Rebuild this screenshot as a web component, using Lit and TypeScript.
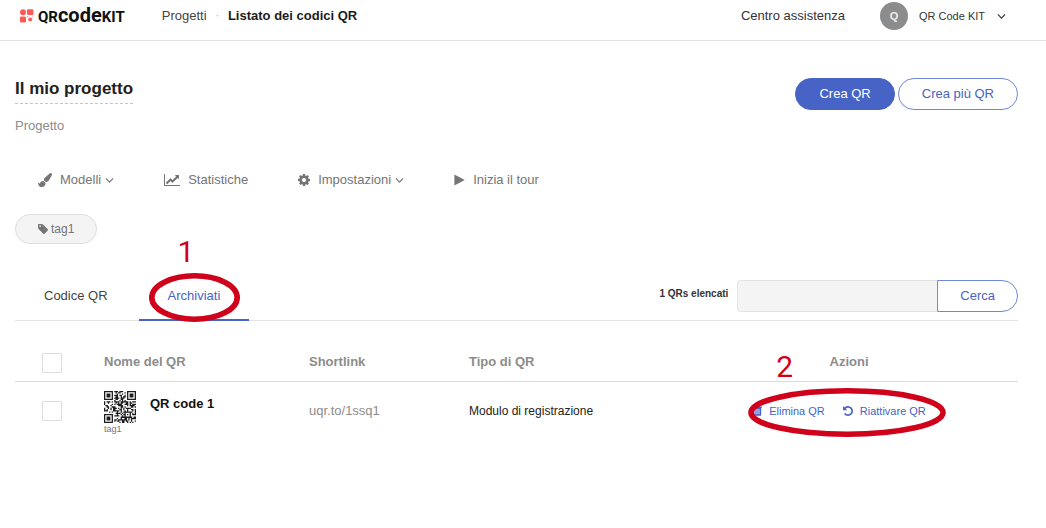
import { LitElement, html, css, svg } from "lit";
import { customElement, state } from "lit/decorators.js";

const QR_SIZE = 25;

/** Builds the module matrix of the thumbnail as one SVG path. */
function qrPath(): string {
  let seed = 4711;
  const next = () => {
    seed = (seed * 1103515245 + 12345) % 2147483648;
    return seed / 2147483648;
  };
  const finder = (x: number, y: number): boolean | null => {
    for (const [fx, fy] of [[0, 0], [QR_SIZE - 7, 0], [0, QR_SIZE - 7]]) {
      const dx = x - fx;
      const dy = y - fy;
      if (dx >= -1 && dx <= 7 && dy >= -1 && dy <= 7) {
        const ring = Math.max(Math.abs(dx - 3), Math.abs(dy - 3));
        return ring === 3 || ring <= 1;
      }
    }
    const align = Math.max(Math.abs(x - 18), Math.abs(y - 18));
    return align <= 2 ? align !== 1 : null;
  };
  let d = "";
  for (let y = 0; y < QR_SIZE; y++) {
    for (let x = 0; x < QR_SIZE; x++) {
      const random = next() < 0.56;
      if (finder(x, y) ?? random) d += `M${x} ${y}h1v1h-1z`;
    }
  }
  return d;
}

const chevron = html`<svg class="chevron" viewBox="0 0 8 6" aria-hidden="true">
  <path d="M.8 1.200 4 4.500 7.200 1.200" fill="none" stroke="currentColor" stroke-width="1" />
</svg>`;

const brush = html`<svg width="14" height="14" viewBox="0 0 1792 1792" fill="currentColor" aria-hidden="true">
  <path d="M1615 0q70 0 122.500 46.500t52.500 116.500q0 63-45 151-332 629-465 752-97 91-218 91-126 0-216.500-92.500t-90.500-219.500q0-128 92-212l638-579q59-54 130-54zm-909 1034q39 76 106.500 130t150.500 76l1 71q4 213-129.500 347t-348.500 134q-123 0-218-46.500t-152.500-127.500-86.500-183-29-220q7 5 41 30t62 44.500 59 36.500 46 17q41 0 55-37 25-66 57.500-112.500t69.500-76 88-47.500 103-25.500 125-10.500z" />
</svg>`;

const chart = html`<svg width="16" height="14" viewBox="0 0 2048 1792" fill="currentColor" aria-hidden="true">
  <path d="M2048 1536v128h-2048v-1536h128v1408h1920zm-128-1248v435q0 21-19.500 29.500t-35.500-7.500l-121-121-633 633q-10 10-23 10t-23-10l-233-233-416 416-192-192 585-585q10-10 23-10t23 10l233 233 464-464-121-121q-16-16-7.500-35.500t29.500-19.500h435q14 0 23 9t9 23z" />
</svg>`;

const gear = html`<svg width="12" height="12" viewBox="0 0 1536 1536" fill="currentColor" aria-hidden="true">
  <path d="M1024 768q0-106-75-181t-181-75-181 75-75 181 75 181 181 75 181-75 75-181zm512-109v222q0 12-8 23t-20 13l-185 28q-19 54-39 91 35 50 107 138 10 12 10 25t-9 23q-27 37-99 108t-94 71q-12 0-26-9l-138-108q-44 23-91 38-16 136-29 186-7 28-36 28h-222q-14 0-24.500-8.500t-11.500-21.500l-28-184q-49-16-90-37l-141 107q-10 9-25 9-14 0-25-11-126-114-165-168-7-10-7-23 0-12 8-23 15-21 51-66.500t54-70.500q-27-50-41-99l-183-27q-13-2-21-12.500t-8-23.500v-222q0-12 8-23t19-13l186-28q14-46 39-92-40-57-107-138-10-12-10-24 0-10 9-23 26-36 98.500-107.500t94.500-71.500q13 0 26 10l138 107q44-23 91-38 16-136 29-186 7-28 36-28h222q14 0 24.500 8.500t11.500 21.500l28 184q49 16 90 37l142-107q9-9 24-9 13 0 25 10 129 119 165 170 7 8 7 22 0 12-8 23-15 21-51 66.500t-54 70.500q26 50 41 98l183 28q13 2 21 12.500t8 23.500z" />
</svg>`;

const play = html`<svg width="11" height="12" viewBox="0 0 11 12" fill="currentColor" aria-hidden="true">
  <path d="M.4.5v11L10.800 6z" />
</svg>`;

const tag = html`<svg width="10" height="10" viewBox="0 0 1515 1515" fill="currentColor" aria-hidden="true">
  <path d="M448 320q0-53-37.500-90.500t-90.500-37.500-90.500 37.500-37.500 90.500 37.500 90.500 90.500 37.500 90.500-37.500 37.500-90.500zm1067 576q0 53-37 90l-491 492q-39 37-91 37-53 0-90-37l-715-716q-38-37-64.500-101t-26.500-117v-416q0-52 38-90t90-38h416q53 0 117 26.500t102 64.500l715 714q37 39 37 91z" />
</svg>`;

const trash = html`<svg width="10" height="11" viewBox="0 0 10 11" fill="currentColor" aria-hidden="true">
  <path fill-rule="evenodd" d="M0 1.500h3L3.500.3h3L7 1.500h3v1.200H9.200V9.700c0 .7-.4 1.100-1 1.100H1.800c-.6 0-1-.4-1-1.100V2.700H0zM2.600 4v5.200h.8V4zm2 0v5.200h.8V4zm2 0v5.200h.8V4z" />
</svg>`;

const undo = html`<svg width="10" height="10" viewBox="0 0 1536 1536" fill="currentColor" aria-hidden="true">
  <path d="M1536 768q0 156-61 298t-164 245-245 164-298 61q-172 0-327-72.500t-264-204.500q-7-10-6.500-22.500t8.500-20.500l137-138q10-9 25-9 16 2 23 12 73 95 179 147t225 52q104 0 198.500-40.500t163.500-109.500 109.500-163.500 40.500-198.500-40.500-198.500-109.500-163.500-163.500-109.500-198.500-40.500q-98 0-188 35.500t-160 101.500l137 138q31 30 14 69-17 40-59 40h-448q-26 0-45-19t-19-45v-448q0-42 40-59 39-17 69 14l130 129q107-101 244.500-156.500t284.500-55.500q156 0 298 61t245 164 164 245 61 298z" />
</svg>`;

@customElement("app-root")
export class AppRoot extends LitElement {
  @state() private tab = "archived";

  static styles = css`
    :host {
      display: block;
      min-height: 100vh;
      background: #fff;
      color: #212121;
      font: 13px/18px "Liberation Sans", Arial, sans-serif;
    }
    * { box-sizing: border-box; }
    a { color: inherit; text-decoration: none; }
    button, input { font: inherit; color: inherit; margin: 0; }
    button { cursor: pointer; background: none; border: 0; padding: 0; }
    svg { flex: none; display: block; }
    .top {
      display: flex;
      align-items: center;
      height: 41px;
      padding: 0 40px 8px 19px;
      border-bottom: 1px solid #e2e2e2;
    }
    .logo { display: flex; align-items: center; gap: 4px; color: #111; }
    .word {
      display: flex;
      align-items: baseline;
      font: 700 15px/32px Roboto, sans-serif;
    }
    .big { font-size: 20px; }
    .crumbs { display: flex; gap: 9px; margin-left: 37px; color: #444; }
    .dot { color: #aaa; font-size: 10px; }
    .here { font-weight: 700; color: #1c1c1c; }
    .help { margin-left: auto; color: #333; }
    .account {
      display: flex;
      align-items: center;
      margin-left: 35px;
      font-size: 11px;
      color: #333;
    }
    .avatar {
      width: 28px;
      height: 28px;
      margin-right: 11px;
      border-radius: 50%;
      background: #8c8c8c;
      color: #eee;
      line-height: 28px;
      font-weight: 700;
    }
    .chevron { width: 9px; height: 7px; }
    .account .chevron { margin-left: 12px; }
    main { padding: 37px 28px 40px 15px; }
    .heading { display: flex; justify-content: space-between; align-items: flex-start; }
    h1 {
      margin: 0;
      padding-bottom: 3px;
      border-bottom: 1px dashed #b9c3ec;
      font-size: 17px;
      line-height: 22px;
    }
    .kind { margin: 7px 0 0; color: #8c8c8c; }
    .create { display: flex; gap: 3px; }
    .btn {
      height: 32px;
      padding: 0 23px;
      border: 1px solid #7088d8;
      border-radius: 16px;
      color: #4763c6;
    }
    .primary { background: #4763c6; border-color: #4763c6; color: #fff; }
    .menu {
      display: flex;
      flex-wrap: wrap;
      gap: 12px 50px;
      margin-top: 35px;
      padding-left: 23px;
      color: #757575;
    }
    .menu button { display: flex; align-items: center; gap: 8px; line-height: 20px; }
    .menu .chevron { margin-left: -4px; }
    .pill {
      display: flex;
      align-items: center;
      gap: 3px;
      height: 30px;
      margin-top: 24px;
      padding: 0 22px;
      border: 1px solid #dedede;
      border-radius: 15px;
      background: #f4f4f4;
      color: #757575;
      font-size: 12px;
    }
    .bar {
      display: flex;
      margin-top: 36px;
      border-bottom: 1px solid #e4e4e4;
    }
    .tabs { display: flex; gap: 2px; margin-bottom: -1px; }
    .tab {
      position: relative;
      padding: 0 29px 7px;
      border-bottom: 2px solid transparent;
      line-height: 32px;
      color: #444;
    }
    .active { color: #4763c6; border-color: #4763c6; }
    .search { display: flex; margin-left: auto; }
    .count { margin-right: 9px; font-size: 10px; line-height: 28px; font-weight: 700; color: #333; }
    .query {
      width: 200px;
      height: 32px;
      padding: 0 10px;
      border: 1px solid #e4e4e4;
      border-right: 0;
      border-radius: 4px 0 0 4px;
      background: #f4f4f4;
    }
    .go { border-radius: 0 16px 16px 0; padding: 0 22px; }
    table { width: 100%; border-collapse: collapse; table-layout: fixed; }
    th, td { padding: 0; text-align: left; height: 60px; }
    thead { border-bottom: 1px solid #dcdcdc; }
    th { padding-top: 22px; color: #8c8c8c; }
    .c-check { width: 89px; padding-left: 27px; }
    .c-name { width: 205px; }
    .c-link { width: 160px; }
    .c-act { width: 338px; text-align: center; }
    .box {
      appearance: none;
      display: block;
      width: 20px;
      height: 20px;
      border: 1px solid #dcdcdc;
      border-radius: 2px;
      background: #fff;
    }
    th .box { margin-top: 2px; }
    .name { display: flex; gap: 14px; padding-top: 4px; font-weight: 700; color: #111; }
    .thumb { font-size: 9px; line-height: 12px; font-weight: 400; color: #757575; }
    .thumb svg { width: 32px; height: 32px; }
    .name a { padding-top: 4px; }
    .link { color: #8c8c8c; }
    .type { font-size: 12px; }
    .actions {
      position: relative;
      display: inline-flex;
      gap: 18px;
      margin-right: 20px;
      font-size: 11px;
      color: #4763c6;
    }
    .actions button { display: flex; align-items: center; gap: 7px; }
    .note {
      position: absolute;
      color: #d0021b;
      font: 400 30px/30px Roboto, sans-serif;
    }
    .ring { position: absolute; overflow: visible; pointer-events: none; }
    .note-1 { left: 39px; top: -43px; }
    .ring-1 { left: 10px; top: -7px; width: 91px; height: 49px; }
    .note-2 { left: 24px; top: -50px; }
    .ring-2 { left: -4px; top: -14px; width: 198px; height: 49px; }
  `;

  render() {
    return html`
      <header class="top">
        <a class="logo" href="#">
          <svg width="15" height="14" viewBox="0 0 15 14" fill="#ff5a55" aria-hidden="true">
            <circle cx="4" cy="3.200" r="3" />
            <path d="M8 1.500Q8 .3 9.200.3h4Q14.400.3 14.400 1.500v3.300Q14.400 6 13.200 6H9.500Q8 6 8 4.500z" />
            <path d="M2.200 7.500h3.300Q7 7.500 7 9v3.200q0 1.300-1.300 1.300H2.200Q1 13.500 1 12.200V8.800Q1 7.500 2.200 7.500z" />
            <circle cx="11.200" cy="10.600" r="2" /><circle cx="8.700" cy="7.900" r=".6" /><circle cx="13.800" cy="7.900" r=".5" />
          </svg>
          <span class="word"><span>QR</span><span class="big">code</span><span>KIT</span></span>
        </a>
        <nav class="crumbs">
          <a href="#">Progetti</a><span class="dot">·</span><span class="here">Listato dei codici QR</span>
        </nav>
        <a class="help" href="#">Centro assistenza</a>
        <button class="account"><span class="avatar">Q</span>QR Code KIT${chevron}</button>
      </header>
      <main>
        <div class="heading">
          <h1>Il mio progetto</h1>
          <div class="create">
            <button class="btn primary">Crea QR</button>
            <button class="btn">Crea più QR</button>
          </div>
        </div>
        <p class="kind">Progetto</p>
        <nav class="menu">
          <button>${brush}Modelli${chevron}</button>
          <button>${chart}Statistiche</button>
          <button>${gear}Impostazioni${chevron}</button>
          <button>${play}Inizia il tour</button>
        </nav>
        <button class="pill">${tag}tag1</button>
        <div class="bar">
          <div class="tabs">
            <button class="tab ${this.tab === "active" ? "active" : ""}" @click=${() => (this.tab = "active")}>Codice QR</button>
            <button class="tab ${this.tab === "archived" ? "active" : ""}" @click=${() => (this.tab = "archived")}>
              Archiviati
              <span class="note note-1">1</span>
              <svg class="ring ring-1" viewBox="0 0 91 49" aria-hidden="true">
                <ellipse cx="45.500" cy="24.500" rx="42.700" ry="21.700" fill="none" stroke="#d0021b" stroke-width="5.600" />
              </svg>
            </button>
          </div>
          <form class="search" @submit=${(e: Event) => e.preventDefault()}>
            <label class="count" for="query">1 QRs elencati</label>
            <input class="query" id="query" type="text" />
            <button class="btn go">Cerca</button>
          </form>
        </div>
        <table>
          <thead>
            <tr>
              <th class="c-check"><input class="box" type="checkbox" aria-label="Seleziona tutti" /></th>
              <th class="c-name">Nome del QR</th>
              <th class="c-link">Shortlink</th>
              <th>Tipo di QR</th>
              <th class="c-act">Azioni</th>
            </tr>
          </thead>
          <tbody>
            <tr>
              <td class="c-check"><input class="box" type="checkbox" aria-label="Seleziona QR code 1" /></td>
              <td>
                <div class="name">
                  <div class="thumb">
                    <svg viewBox="0 0 25 25" fill="#1c1c1c" aria-hidden="true">${svg`<path d=${qrPath()} />`}</svg>
                    tag1
                  </div>
                  <a href="#">QR code 1</a>
                </div>
              </td>
              <td class="link"><a href="#">uqr.to/1ssq1</a></td>
              <td class="type">Modulo di registrazione</td>
              <td class="c-act">
                <div class="actions">
                  <button>${trash}Elimina QR</button>
                  <button>${undo}Riattivare QR</button>
                  <span class="note note-2">2</span>
                  <svg class="ring ring-2" viewBox="0 0 198 49" aria-hidden="true">
                    <ellipse cx="99" cy="24.500" rx="96" ry="21.700" fill="none" stroke="#d0021b" stroke-width="5.600" />
                  </svg>
                </div>
              </td>
            </tr>
          </tbody>
        </table>
      </main>
    `;
  }
}
